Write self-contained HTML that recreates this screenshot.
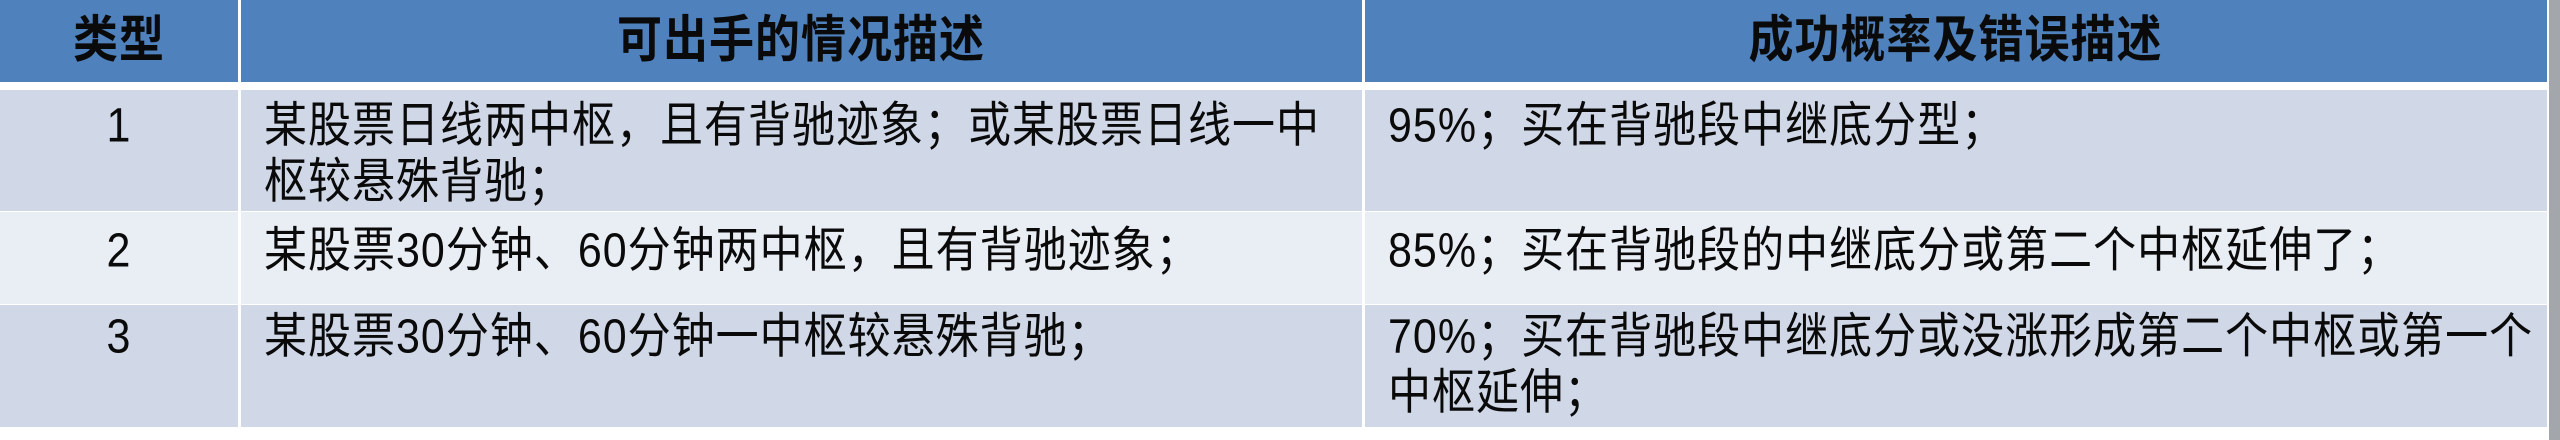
<!DOCTYPE html>
<html><head><meta charset="utf-8"><style>
*{margin:0;padding:0;box-sizing:border-box}
body{width:2560px;height:440px;background:#fff;position:relative;overflow:hidden;font-family:"Liberation Sans","Noto Sans CJK SC",sans-serif;color:#111}
.r{position:absolute;left:0;width:2547px}
.v{position:absolute;top:0;width:3px;height:428px;background:#fff}
.t{position:absolute;white-space:nowrap;font-size:43px;line-height:50px;letter-spacing:1px;transform:scaleY(1.12);transform-origin:0 0;color:#0a0a0a}
.h{font-weight:bold;font-size:45px}
</style></head><body>
<div class="r" style="top:0;height:82px;background:#4f81bd"></div>
<div class="r" style="top:90px;height:121px;background:#d0d8e8"></div>
<div class="r" style="top:212px;height:92px;background:#e9edf4"></div>
<div class="r" style="top:305px;height:122px;background:#d0d8e8"></div>
<div style="position:absolute;left:2549px;top:0;width:11px;height:440px;background:#a3a6aa"></div>
<div class="v" style="left:238px"></div>
<div class="v" style="left:1362px"></div>
<div class="t h" style="left:0;width:238px;text-align:center;top:12px">类型</div>
<div class="t h" style="left:240px;width:1122px;text-align:center;top:12px">可出手的情况描述</div>
<div class="t h" style="left:1364px;width:1183px;text-align:center;top:12px">成功概率及错误描述</div>
<div class="t" style="left:0;width:238px;text-align:center;top:98px">1</div>
<div class="t" style="left:0;width:238px;text-align:center;top:223px">2</div>
<div class="t" style="left:0;width:238px;text-align:center;top:309px">3</div>
<div class="t" style="left:264px;top:98px">某股票日线两中枢，且有背驰迹象；或某股票日线一中<br>枢较悬殊背驰；</div>
<div class="t" style="left:264px;top:223px">某股票30分钟、60分钟两中枢，且有背驰迹象；</div>
<div class="t" style="left:264px;top:309px">某股票30分钟、60分钟一中枢较悬殊背驰；</div>
<div class="t" style="left:1388px;top:98px">95%；买在背驰段中继底分型；</div>
<div class="t" style="left:1388px;top:223px">85%；买在背驰段的中继底分或第二个中枢延伸了；</div>
<div class="t" style="left:1388px;top:309px">70%；买在背驰段中继底分或没涨形成第二个中枢或第一个<br>中枢延伸；</div>
</body></html>
